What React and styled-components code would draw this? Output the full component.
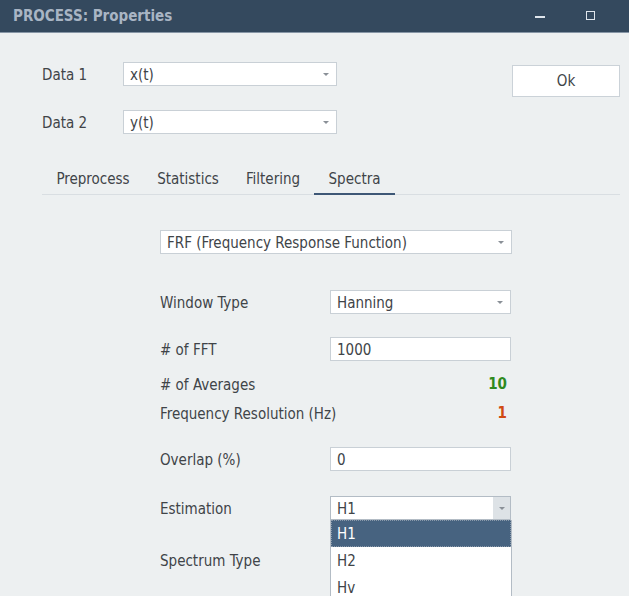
import React from 'react';
import styled, { createGlobalStyle } from 'styled-components';

const ink = '#404448';
const slate = '#34495e';
const field = '#c9d0d6';

const GlobalStyle = createGlobalStyle`
  html, body {
    margin: 0;
    padding: 0;
    background: #edf0f1;
  }
  body {
    font-family: "DejaVu Sans Condensed", "DejaVu Sans", sans-serif;
    font-size: 15px;
    color: ${ink};
  }
`;

const Window = styled.div`
  width: 629px;
  height: 596px;
  overflow: hidden;
  background: #edf0f1;
  position: relative;
  white-space: nowrap;
`;

const TitleBar = styled.div`
  height: 32px;
  background: ${slate};
  border-bottom: 1px solid #8796a6;
  display: flex;
  align-items: center;
  padding: 0 14px 0 13px;
  color: #a9b5c4;
  font-weight: bold;
  font-size: 15px;
`;

const Title = styled.div`
  flex: 1;
`;

const WinButton = styled.div`
  width: 50px;
  height: 32px;
  display: flex;
  align-items: center;
  justify-content: center;
`;

const MinGlyph = styled.div`
  width: 10px;
  height: 2px;
  background: #dfe5ec;
  margin-top: 2px;
`;

const MaxGlyph = styled.div`
  width: 7px;
  height: 7px;
  border: 1.5px solid #dfe5ec;
  margin-top: -2px;
`;

const Body = styled.div`
  padding: 29px 9px 0 42px;
`;

const Top = styled.div`
  display: flex;
  justify-content: space-between;
  align-items: flex-start;
`;

const DataRows = styled.div`
  display: flex;
  flex-direction: column;
  gap: 24px;
`;

const Row = styled.div`
  display: flex;
  align-items: center;
  height: 24px;
  margin-top: ${p => p.$mt || 0}px;
`;

const Label = styled.div`
  width: ${p => p.$w}px;
  flex-shrink: 0;
  padding-top: 2px;
`;

const Combo = styled.div`
  width: ${p => p.$w}px;
  height: 24px;
  box-sizing: border-box;
  background: #fff;
  border: 1px solid ${p => (p.$open ? '#b3bcc5' : field)};
  display: flex;
  align-items: center;
  padding-left: 6px;
`;

const ComboText = styled.div`
  flex: 1;
  padding-top: 1px;
`;

const ArrowBox = styled.div`
  width: 17px;
  align-self: stretch;
  display: flex;
  align-items: center;
  justify-content: center;
  background: ${p => (p.$pressed ? '#dde2e6' : 'transparent')};
  margin-right: ${p => (p.$pressed ? 0 : 2)}px;
`;

const Arrow = styled.div`
  width: 0;
  height: 0;
  border-left: 3px solid transparent;
  border-right: 3px solid transparent;
  border-top: 3px solid #8a9097;
`;

const Input = styled.div`
  width: 181px;
  height: 24px;
  box-sizing: border-box;
  background: #fff;
  border: 1px solid ${field};
  display: flex;
  align-items: center;
  padding: 1px 0 0 6px;
`;

const Value = styled.div`
  width: 181px;
  text-align: right;
  padding-right: 4px;
  box-sizing: border-box;
  font-weight: bold;
  color: ${p => p.$color};
`;

const OkButton = styled.div`
  width: 108px;
  height: 32px;
  box-sizing: border-box;
  margin-top: 3px;
  background: #fff;
  border: 1px solid #cbd2d8;
  display: flex;
  align-items: center;
  justify-content: center;
`;

const Tabs = styled.div`
  display: flex;
  margin-top: 30px;
  height: 30px;
  border-bottom: 1px solid #d9dee2;
`;

const Tab = styled.div`
  width: ${p => p.$w}px;
  box-sizing: border-box;
  display: flex;
  align-items: center;
  justify-content: center;
  border-bottom: 2px solid ${p => (p.$active ? '#3e5776' : 'transparent')};
  margin-bottom: -1px;
`;

const Panel = styled.div`
  padding: 35px 0 0 118px;
`;

const Anchor = styled.div`
  position: relative;
`;

const List = styled.div`
  position: absolute;
  left: 0;
  top: 24px;
  width: 180px;
  background: #fff;
  border: 1px solid #b3bcc5;
  border-top: none;
`;

const Item = styled.div`
  height: 27px;
  display: flex;
  align-items: center;
  padding-left: 6px;
  box-sizing: border-box;
  background: ${p => (p.$selected ? '#476380' : 'transparent')};
  color: ${p => (p.$selected ? '#fff' : ink)};
  outline: ${p => (p.$selected ? '1px dotted #8a99aa' : 'none')};
  outline-offset: -1px;
`;

const tabs = [
  { name: 'Preprocess', w: 102 },
  { name: 'Statistics', w: 88 },
  { name: 'Filtering', w: 82 },
  { name: 'Spectra', w: 81, active: true },
];

export default function App() {
  return (
    <Window>
      <GlobalStyle />
      <TitleBar>
        <Title>PROCESS: Properties</Title>
        <WinButton><MinGlyph /></WinButton>
        <WinButton><MaxGlyph /></WinButton>
      </TitleBar>
      <Body>
        <Top>
          <DataRows>
            <Row>
              <Label $w={81}>Data 1</Label>
              <Combo $w={214}>
                <ComboText>x(t)</ComboText>
                <ArrowBox><Arrow /></ArrowBox>
              </Combo>
            </Row>
            <Row>
              <Label $w={81}>Data 2</Label>
              <Combo $w={214}>
                <ComboText>y(t)</ComboText>
                <ArrowBox><Arrow /></ArrowBox>
              </Combo>
            </Row>
          </DataRows>
          <OkButton>Ok</OkButton>
        </Top>
        <Tabs>
          {tabs.map(t => (
            <Tab key={t.name} $w={t.w} $active={t.active}>{t.name}</Tab>
          ))}
        </Tabs>
        <Panel>
          <Row>
            <Combo $w={352}>
              <ComboText>FRF (Frequency Response Function)</ComboText>
              <ArrowBox><Arrow /></ArrowBox>
            </Combo>
          </Row>
          <Row $mt={36}>
            <Label $w={170}>Window Type</Label>
            <Combo $w={181}>
              <ComboText>Hanning</ComboText>
              <ArrowBox><Arrow /></ArrowBox>
            </Combo>
          </Row>
          <Row $mt={23}>
            <Label $w={170}># of FFT</Label>
            <Input>1000</Input>
          </Row>
          <Row $mt={11}>
            <Label $w={170}># of Averages</Label>
            <Value $color="#2f8a1e">10</Value>
          </Row>
          <Row $mt={5}>
            <Label $w={170}>Frequency Resolution (Hz)</Label>
            <Value $color="#d04a12">1</Value>
          </Row>
          <Row $mt={22}>
            <Label $w={170}>Overlap (%)</Label>
            <Input>0</Input>
          </Row>
          <Row $mt={25}>
            <Label $w={170}>Estimation</Label>
            <Anchor>
              <Combo $w={181} $open>
                <ComboText>H1</ComboText>
                <ArrowBox $pressed><Arrow /></ArrowBox>
              </Combo>
              <List>
                <Item $selected>H1</Item>
                <Item>H2</Item>
                <Item>Hv</Item>
              </List>
            </Anchor>
          </Row>
          <Row $mt={28}>
            <Label $w={170}>Spectrum Type</Label>
          </Row>
        </Panel>
      </Body>
    </Window>
  );
}
